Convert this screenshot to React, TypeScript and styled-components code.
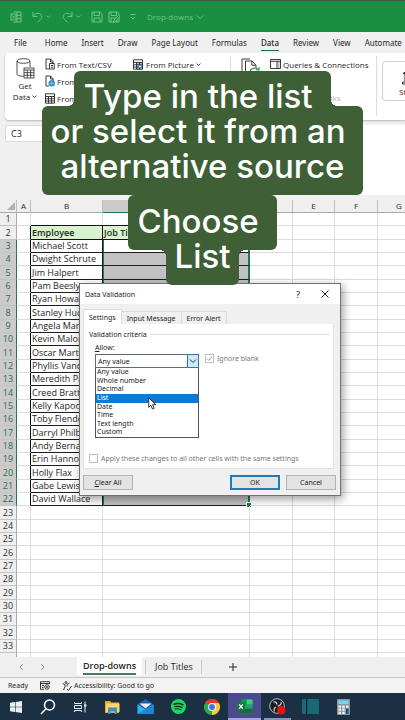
import React from "react";
import styled, { createGlobalStyle, css } from "styled-components";

const wideFont = `"Noto Sans", "Open Sans", sans-serif`;

const GlobalStyle = createGlobalStyle`
  *, *::before, *::after { box-sizing: border-box; }
  html, body, #root { height: 100%; }
  body {
    margin: 0;
    background: #f0f0f0;
    font-family: "Open Sans", "Noto Sans", sans-serif;
    font-size: 8px;
    color: #262626;
  }
  button, select, input { font: inherit; color: inherit; margin: 0; padding: 0; }
  button { background: none; border: 0; }
`;

/* ---------- shell ---------- */

const Screen = styled.main`
  position: relative;
  display: flex;
  flex-direction: column;
  height: 100vh;
  min-height: 720px;
  overflow: hidden;
`;

const TitleBar = styled.header`
  display: flex;
  align-items: center;
  flex: none;
  height: 32px;
  padding-left: 10px;
  background: #1a8f42;
  border-top: 1px solid #3c5a45;
  color: #6cc287;
`;

const QuickTools = styled.div`
  display: flex;
  align-items: center;
  gap: 5px;
  width: 137px;
`;

const IconButton = styled.button`
  display: flex;
  align-items: center;
  gap: 3px;
`;

const FileName = styled.button`
  display: flex;
  align-items: center;
  gap: 3px;
`;

const MenuTabs = styled.nav`
  display: flex;
  flex: none;
  gap: 14px;
  height: 21px;
  padding: 4px 0 0 14px;
  font-family: ${wideFont};
  overflow: hidden;
`;

const MenuTab = styled.button<{ $active?: boolean }>`
  flex: none;
  height: 15px;
  line-height: 14px;
  white-space: nowrap;
  border-bottom: 1px solid transparent;
  &:first-child { margin-right: 4px; }
  ${(p) => p.$active && css`font-weight: 500; border-color: #1d6f42;`}
`;

/* ---------- ribbon ---------- */

const Ribbon = styled.section`
  display: flex;
  flex: none;
  height: 67px;
  margin-left: 5px;
  background: #fff;
  border-radius: 4px 0 0 4px;
  box-shadow: 0 1px 2px #b9b9b9;
  overflow: hidden;
`;

const BigCommand = styled.button<{ $w: number }>`
  display: flex;
  flex-direction: column;
  align-items: center;
  flex: none;
  width: ${(p) => p.$w}px;
  padding-top: 5px;
  line-height: 11px;
  svg { margin-bottom: 1px; }
`;

const CommandColumn = styled.div<{ $w: number }>`
  display: flex;
  flex-direction: column;
  flex: none;
  gap: 3px;
  width: ${(p) => p.$w}px;
  padding-top: 4px;
`;

const Command = styled.button<{ $off?: boolean }>`
  display: flex;
  align-items: center;
  gap: 2px;
  height: 14px;
  white-space: nowrap;
  color: ${(p) => (p.$off ? "#b5b5b5" : "#262626")};
`;

const Divider = styled.div`
  flex: none;
  width: 1px;
  margin: 3px 0 4px;
  background: #dcdcdc;
`;

const DataTypes = styled.div`
  flex: none;
  width: 80px;
  height: 40px;
  margin: 8px 0 0 5px;
  border: 1px solid #d0d0d0;
  border-radius: 3px;
`;

const FormulaRow = styled.div`
  display: flex;
  flex: none;
  align-items: flex-start;
  gap: 60px;
  height: 75px;
  margin: 5px 0 0 5px;
`;

const NameBox = styled.input`
  width: 60px;
  height: 17px;
  padding-left: 5px;
  font-size: 9px;
  background: #fff;
  border: 1px solid #dadada;
  border-radius: 2px;
`;

const FormulaInput = styled.textarea`
  flex: 1;
  min-width: 0;
  height: 70px;
  border: 0;
  resize: none;
  background: #fff;
`;

/* ---------- sheet ---------- */

const SheetArea = styled.section`
  flex: 1;
  min-height: 0;
  overflow: hidden;
  background: #fff;
`;

const Sheet = styled.table`
  width: calc(100% + 16px);
  table-layout: fixed;
  border-collapse: separate;
  border-spacing: 0;
  font-size: 9px;
  line-height: 12px;
`;

const Col = styled.col<{ $w?: number }>`
  width: ${(p) => (p.$w ? p.$w + "px" : "auto")};
`;

const ColHead = styled.th<{ $on?: boolean }>`
  height: 13px;
  padding: 0;
  font-size: 8px;
  font-weight: 400;
  background: ${(p) => (p.$on ? "#cbcbcb" : "#efefef")};
  border-right: 1px solid #bdbdbd;
  border-bottom: 1px solid ${(p) => (p.$on ? "#1d7a48" : "#ababab")};
`;

const Corner = styled(ColHead)`
  svg { display: block; margin-left: auto; }
`;

const Row = styled.tr<{ $tall: boolean }>`
  height: ${(p) => (p.$tall ? 14 : 13)}px;
`;

const RowHead = styled.th<{ $on?: boolean }>`
  padding: 0;
  font-weight: 400;
  text-align: center;
  color: ${(p) => (p.$on ? "#2b6b48" : "#333")};
  background: ${(p) => (p.$on ? "#cbcbcb" : "#efefef")};
  border-bottom: 1px solid #c4c4c4;
  border-right: 1px solid ${(p) => (p.$on ? "#1d7a48" : "#ababab")};
`;

const Cell = styled.td<{ $kind?: "head" | "plainHead" | "name" | "picked" | "first" | "edge" | "corner" }>`
  position: relative;
  padding: 0 0 0 1px;
  white-space: nowrap;
  border-right: 1px solid #dcdcdc;
  border-bottom: 1px solid #dcdcdc;
  ${(p) => p.$kind === "edge" && css`border-right-color: #111;`}
  ${(p) =>
    p.$kind === "head" &&
    css`
      font-weight: 600;
      background: #d9f2d0;
      border-color: #111;
      box-shadow: 0 -1px 0 #111;
    `}
  ${(p) => p.$kind === "name" && css`border-color: #1d1d1d;`}
  ${(p) =>
    (p.$kind === "picked" || p.$kind === "first" || p.$kind === "corner") &&
    css`
      background: ${p.$kind === "first" ? "#fff" : "#c2c2c2"};
      border-bottom-color: #1d1d1d;
      border-right: 2px solid #1d7a48;
      border-left: 1px solid #1d7a48;
    `}
  ${(p) =>
    p.$kind === "corner" &&
    css`
      &::after {
        content: "";
        position: absolute;
        right: -3px;
        bottom: -2px;
        width: 4px;
        height: 4px;
        background: #1d7a48;
        outline: 1px solid #fff;
      }
    `}
`;

/* ---------- bottom bars ---------- */

const SheetTabs = styled.nav`
  display: flex;
  flex: none;
  height: 21px;
  background: #efefef;
  border-bottom: 1px solid #c6c6c6;
`;

const PageArrows = styled.div`
  display: flex;
  align-items: center;
  gap: 16px;
  width: 77px;
  padding-left: 19px;
  color: #8c8c8c;
`;

const SheetTab = styled.button<{ $active?: boolean }>`
  flex: none;
  font-size: 9px;
  height: 19px;
  padding: 0 6px;
  ${(p) =>
    p.$active
      ? css`
          font-weight: 600;
          background: #fff;
          border-radius: 0 0 3px 3px;
          span { display: block; line-height: 14px; border-bottom: 2px solid #3f7f60; }
        `
      : css`
          margin: 3px 0 0 3px;
          padding: 0 8px 0 9px;
          height: 14px;
          line-height: 14px;
          border-left: 1px solid #c9c9c9;
          border-right: 1px solid #c9c9c9;
        `}
`;

const AddSheet = styled.button`
  display: flex;
  align-items: center;
  margin-left: 27px;
`;

const StatusBar = styled.footer`
  display: flex;
  align-items: center;
  flex: none;
  height: 15px;
  padding-left: 8px;
  font-family: ${wideFont};
  font-size: 7px;
  background: #f3f3f3;
  svg { margin-left: 12px; }
  svg + svg { margin-right: 2px; }
`;

const Taskbar = styled.nav`
  display: flex;
  flex: none;
  height: 27px;
  background: #1c3044;
`;

const TaskButton = styled.button<{ $wide?: boolean; $state?: "active" | "open" }>`
  display: flex;
  align-items: center;
  justify-content: center;
  flex: none;
  width: ${(p) => (p.$wide ? 33 : 32)}px;
  ${(p) => p.$state === "active" && css`background: #4a4a8c; box-shadow: inset 0 -2px 0 #a9a6dd;`}
  ${(p) =>
    p.$state === "open" &&
    css`
      background: linear-gradient(#8f8fc0, #8f8fc0) center bottom / 27px 2px no-repeat;
    `}
`;

/* ---------- dialog ---------- */

const Dialog = styled.div`
  position: absolute;
  left: 79px;
  top: 283px;
  width: 262px;
  background: #f0f0f0;
  border: 1px solid #707070;
  box-shadow: 2px 3px 9px rgba(0, 0, 0, 0.4);
  padding-bottom: 5px;
  font-family: ${wideFont};
  font-size: 7px;
  line-height: 9px;
  color: #1a1a1a;
`;

const DialogTitle = styled.div`
  display: flex;
  align-items: center;
  height: 20px;
  padding: 0 11px 0 5px;
  background: #fff;
`;

const DialogName = styled.h2`
  flex: 1;
  margin: 0;
  font-size: 7px;
  font-weight: 400;
`;

const HelpButton = styled.button`
  margin-right: 21px;
  font-size: 9px;
`;

const DialogTabs = styled.div`
  display: flex;
  align-items: flex-end;
  padding: 5px 0 0 3px;
`;

const DialogTab = styled.button<{ $active?: boolean }>`
  height: ${(p) => (p.$active ? 15 : 13)}px;
  padding: 0 5px;
  border: 1px solid #dcdcdc;
  border-bottom: 0;
  background: ${(p) => (p.$active ? "#fff" : "#f0f0f0")};
  & + & { border-left: 0; }
`;

const Pane = styled.div`
  display: flex;
  flex-direction: column;
  height: 145px;
  margin: 0 6px 0 3px;
  padding: 6px 3px 5px 5px;
  background: #fff;
  border: 1px solid #e2e2e2;
  border-top: 0;
`;

const GroupTitle = styled.div`
  display: flex;
  align-items: center;
  gap: 3px;
  &::after { content: ""; flex: 1; height: 1px; background: #dcdcdc; }
`;

const AllowLabel = styled.label`
  margin: 4px 0 2px 6px;
  &::first-letter { text-decoration: underline; }
`;

const CriteriaRow = styled.div`
  display: flex;
  gap: 6px;
  margin-left: 6px;
`;

const SelectWrap = styled.div`
  position: relative;
  width: 104px;
  height: 14px;
`;

const AllowSelect = styled.select`
  width: 100%;
  height: 14px;
  padding-left: 2px;
  appearance: none;
  background: #fff;
  border: 1px solid #5b6b7a;
  border-radius: 0;
`;

const SelectArrow = styled.span`
  position: absolute;
  right: 0;
  top: 0;
  display: flex;
  align-items: center;
  justify-content: center;
  width: 12px;
  height: 14px;
  background: #cfe7f6;
  border: 1px solid #2b78ae;
  pointer-events: none;
`;

const Options = styled.ul`
  position: absolute;
  left: 0;
  top: 14px;
  display: grid;
  grid-template-rows: repeat(8, 1fr);
  width: 104px;
  height: 70px;
  margin: 0;
  padding: 0;
  list-style: none;
  background: #fff;
  border: 1px solid #4a5560;
  border-top: 0;
`;

const Option = styled.li<{ $on: boolean }>`
  padding-left: 1px;
  line-height: 8px;
  color: ${(p) => (p.$on ? "#fff" : "#1a1a1a")};
  background: ${(p) => (p.$on ? "#0f7bd0" : "#fff")};
`;

const Pointer = styled.svg`
  position: absolute;
  left: 52px;
  top: 29px;
`;

const CheckLabel = styled.label`
  display: flex;
  align-items: center;
  gap: 3px;
  height: 9px;
  white-space: nowrap;
  color: #787878;
`;

const Check = styled.input`
  appearance: none;
  width: 9px;
  height: 9px;
  background: #fff;
  border: 1px solid #c0c0c0;
  &:checked {
    background: #fff
      url("data:image/svg+xml,%3Csvg xmlns='http://www.w3.org/2000/svg' viewBox='0 0 7 7'%3E%3Cpath d='M1 3.6 2.8 5.4 6 1.6' fill='none' stroke='%23999'/%3E%3C/svg%3E");
  }
`;

const Spacer = styled.div`
  flex: 1;
`;

const DialogActions = styled.div`
  display: flex;
  gap: 6px;
  padding: 6px 4px 0 3px;
`;

const DialogButton = styled.button<{ $main?: boolean }>`
  width: 50px;
  height: 15px;
  background: #e3e3e3;
  border: ${(p) => (p.$main ? "2px solid #1f7ab8" : "1px solid #b3b3b3")};
`;

/* ---------- captions ---------- */

const Captions = styled.div`
  position: absolute;
  top: 71px;
  left: 0;
  right: 0;
  display: flex;
  flex-direction: column;
  align-items: center;
  font-family: Inter, sans-serif;
  font-size: 33px;
  font-weight: 500;
  line-height: 35px;
  color: #fff;
`;

const CaptionBlock = styled.p<{ $w: number; $h: number; $pad: number }>`
  position: relative;
  width: ${(p) => p.$w}px;
  height: ${(p) => p.$h}px;
  margin: 0;
  padding-top: ${(p) => p.$pad}px;
  text-align: center;
  white-space: pre;
  background: #3f6036;
  border-radius: 6px;
`;

const notch = css`
  content: "";
  position: absolute;
  width: 6px;
  height: 6px;
`;

const CaptionTop = styled(CaptionBlock)`
  z-index: 1;
  border-radius: 6px 6px 0 0;
  &::before, &::after { ${notch} bottom: 0; }
  &::before { right: 100%; background: radial-gradient(circle at 0 0, transparent 6px, #3f6036 6px); }
  &::after { left: 100%; background: radial-gradient(circle at 100% 0, transparent 6px, #3f6036 6px); }
`;

const CaptionTail = styled(CaptionBlock)`
  margin-top: -11px;
  border-radius: 0 0 6px 6px;
  &::before, &::after { ${notch} top: 11px; }
  &::before { right: 100%; background: radial-gradient(circle at 0 100%, transparent 6px, #3f6036 6px); }
  &::after { left: 100%; background: radial-gradient(circle at 100% 100%, transparent 6px, #3f6036 6px); }
`;

/* ---------- drawings ---------- */

const Chevron = ({ size = 5, thin }: { size?: number; thin?: boolean }) => (
  <svg width={size} height={size} viewBox="0 0 8 8" fill="none" stroke="currentColor" strokeWidth={thin ? 0.9 : 1.4}>
    <path d="M1 2.5 4 5.5 7 2.5" />
  </svg>
);

const line = { fill: "none", stroke: "currentColor", strokeWidth: 1 } as const;

const BookIcon = () => (
  <svg width="12" height="12" viewBox="0 0 12 12" {...line}>
    <path d="M3.500 1h7.500v10h-7.500M7 1v10M3 4.300h8M3 7.600h8" />
    <rect x="1" y="3" width="5" height="6" fill="#1a8f42" />
    <path d="m2.300 4.500 2.400 3M4.700 4.500l-2.400 3" />
  </svg>
);
const UndoIcon = ({ flip }: { flip?: boolean }) => (
  <svg width="11" height="12" viewBox="0 0 11 12" {...line}>
    <g transform={flip ? "matrix(-1 0 0 1 11 0)" : undefined}>
      <path d="M1 1v4.500h4.500M1.300 5.200C3 2.500 5.500 1.600 7.800 2.700c2.500 1.300 2.500 4 .7 5.800L5.500 11.300" />
    </g>
  </svg>
);
const SaveIcon = ({ edit }: { edit?: boolean }) => (
  <svg width="12" height="12" viewBox="0 0 12 12" {...line}>
    <path d="M1 1h8.500L11 2.500V11H1zM3 1v3.500h5.500V1M3 11V7h6v4" />
    {edit && <path d="M5.500 11.500 6 9l4.500-4.500 1.200 1.200L7.500 10.500z" fill="#1a8f42" />}
  </svg>
);
const MoreIcon = () => (
  <svg width="6" height="8" viewBox="0 0 6 8" {...line}>
    <path d="M.5 1.500h5M1 4l2 2 2-2" />
  </svg>
);

const DatabaseIcon = () => (
  <svg width="19" height="21" viewBox="0 0 19 21" {...line} strokeWidth=".8">
    <ellipse cx="7.500" cy="3" rx="6.500" ry="2.300" />
    <path d="M1 3v13c0 1.300 2.700 2.300 6.500 2.300M14 3v6" />
    <rect x="8" y="10" width="10" height="10" fill="#fff" />
    <path d="M8 12h10M8 14.700h10M8 17.300h10M11.300 12v8M14.700 12v8" />
  </svg>
);
const PageIcon = ({ kind }: { kind: "text" | "web" }) => (
  <svg width="10" height="12" viewBox="0 0 10 12" {...line} strokeWidth=".9">
    <path d="M4 11H1V1h4.500L8 3.500V6M5.500 1v3H8" />
    {kind === "web" ? (
      <g>
        <circle cx="6.800" cy="8.300" r="2.900" fill="#2b93c9" stroke="#1e7fb5" />
        <path d="M4 8.300h5.600M6.800 5.500v5.600" stroke="#bfe3f5" strokeWidth=".5" />
      </g>
    ) : (
      <path d="M4.500 5.500h4.800V11H4.500zM6 7.500h2M6 9.200h2" />
    )}
  </svg>
);
const TableIcon = ({ tint }: { tint?: boolean }) => (
  <svg width={tint ? 12 : 10} height="11" viewBox="0 0 10 11" {...line} strokeWidth=".9">
    {tint && <path d="M4 4h5.500v6.500H4z" fill="#8cc7e0" stroke="none" />}
    <path d="M.5.800h9v9.400h-9zM.5 3.500h9M.5 5.800h9M.5 8h9M3.500 3.500v6.700M6.500 3.500v6.700" />
    {tint && <circle cx="7" cy="7.500" r="1.400" fill="#fff" stroke="#2a7fa5" />}
  </svg>
);
const RefreshIcon = () => (
  <svg width="19" height="21" viewBox="0 0 19 21" {...line} strokeWidth=".9">
    <path d="M3.500 17H1V1h8M6 19H4.500V3h6.300L15 7.200V10M10.800 3v4.200H15" />
    <path d="M9 15c0-5 6-6 8.500-3.500M18 9v3h-3M17.500 15c0 5-6 6-8.500 3.500" stroke="#2f9a52" strokeWidth="1.200" />
  </svg>
);
const PanelIcon = () => (
  <svg width="11" height="10" viewBox="0 0 11 10" {...line} strokeWidth=".9">
    <path d="M.5.500h10v9H.5zM.5 2.300h10" />
    <path d="M7 2.300v7.200" />
    <path d="M8 4h1.500M8 6h1.500M8 8h1.500" stroke="#2a8aa8" />
  </svg>
);
const LinkIcon = () => (
  <svg width="9" height="10" viewBox="0 0 9 10" {...line}>
    <path d="M1 1h5v8H1zM5 6h3" />
  </svg>
);
const BankIcon = () => (
  <svg width="20" height="18" viewBox="0 0 20 18" {...line}>
    <path d="M2 6.500 10 1l8 5.500zM4 7v7M8 7v7M12 7v7M16 7v7M1.500 15h17v2h-17z" />
  </svg>
);
const Arrow = ({ left }: { left?: boolean }) => (
  <svg width="5" height="8" viewBox="0 0 5 8" {...line}>
    <path d={left ? "M4 1 1 4l3 3" : "M1 1l3 3-3 3"} />
  </svg>
);

const WindowsLogo = () => (
  <svg width="12" height="12" viewBox="0 0 12 12" fill="#e8f0f6">
    <path d="M0 1.700 5 1v4.700H0zM5.600.900 12 0v5.700H5.600zM0 6.300h5V11l-5-.700zM5.600 6.300H12V12l-6.400-.900z" />
  </svg>
);
const SearchIcon = () => (
  <svg width="16" height="16" viewBox="0 0 16 16" fill="none" stroke="#fff" strokeWidth="1.500">
    <circle cx="9.500" cy="6" r="5" />
    <path d="M6 9.700 1 15" />
  </svg>
);
const TaskViewIcon = () => (
  <svg width="13" height="12" viewBox="0 0 13 12" fill="none" stroke="#e6edf3">
    <path d="M.5 1v1.500h7V1M.5 11V9.500h7V11M.5 4.500h7v3h-7zM11 .500v11" />
    <path d="M10 3.500h2.500v2H10z" fill="#e6edf3" stroke="none" />
  </svg>
);
const FolderIcon = () => (
  <svg width="15" height="14" viewBox="0 0 15 14">
    <path d="M0 1h5l1.500 1.500H14V13H0z" fill="#e8a92b" />
    <path d="M1 3.500h13.500V12H1z" fill="#fbd766" />
    <path d="M3 7.500h9V14H9.500v-2.500h-4V14H3z" fill="#3d8fd1" />
  </svg>
);
const MailIcon = () => (
  <svg width="17" height="15" viewBox="0 0 17 15">
    <path d="M.5 5.500 8.500 0l8 5.500v2H.5z" fill="#1565b0" />
    <path d="M2.500 4.500h12L8.500 9.500z" fill="#e9f2f9" />
    <path d="M.5 5.500 8.500 10l8-4.500V15H.5z" fill="#35b1f1" />
    <path d="M.5 15 16.500 5.500V15z" fill="#1c86d6" />
  </svg>
);
const SpotifyIcon = () => (
  <svg width="15" height="15" viewBox="0 0 15 15">
    <circle cx="7.500" cy="7.500" r="7.500" fill="#1ed760" />
    <g fill="none" stroke="#14251c" strokeLinecap="round">
      <path d="M3.200 5.200c3-1 6.200-.7 8.800.7" strokeWidth="1.500" />
      <path d="M3.700 7.700c2.500-.7 5-.5 7.300.7" strokeWidth="1.200" />
      <path d="M4.200 10c2-.5 4-.3 5.900.7" />
    </g>
  </svg>
);
const ChromeIcon = () => (
  <svg width="16" height="16" viewBox="0 0 16 16">
    <path d="M8 8 1.070 4A8 8 0 0 1 14.930 4z" fill="#e33b2e" />
    <path d="M8 8 14.930 4A8 8 0 0 1 8 16z" fill="#fcc934" />
    <path d="M8 8v8A8 8 0 0 1 1.070 4z" fill="#2da94f" />
    <path d="M8 4h6.930L11.500 10z" fill="#fcc934" />
    <path d="M1.070 4H8v4L4.500 10z" fill="#2da94f" />
    <path d="M1.070 4A8 8 0 0 1 14.930 4H8L4.500 6z" fill="#e33b2e" />
    <circle cx="8" cy="8" r="3.900" fill="#fff" />
    <circle cx="8" cy="8" r="3" fill="#3b78e7" />
  </svg>
);
const ExcelIcon = () => (
  <svg width="17" height="15" viewBox="0 0 17 15">
    <rect x="5" y=".5" width="11.500" height="14" rx="1" fill="#21a366" />
    <path d="M5 .500h5.700v4.700H5z" fill="#159355" />
    <path d="M10.700.500h5.800v4.700h-5.800z" fill="#3fce86" />
    <path d="M5 9.800h11.500v4.700H5z" fill="#17693e" />
    <rect x="1" y="3.500" width="8" height="8" rx=".8" fill="#107c41" />
    <path d="m3.200 5.300 3.600 4.400M6.800 5.300 3.200 9.700" stroke="#fff" strokeWidth="1.200" />
  </svg>
);
const ObsIcon = () => (
  <svg width="17" height="17" viewBox="0 0 17 17">
    <circle cx="8" cy="8" r="7.300" fill="#1b1b1f" stroke="#c6ccd2" strokeWidth=".9" />
    <g fill="none" stroke="#c6ccd2" strokeWidth="1.300">
      <path d="M8 6.500C7.500 4 5.500 3.500 4.500 4.200M8.700 8.200c2.500-.8 3.800-2.400 3.300-4M7 9c-2 1.200-2.500 3-1.500 4.300" />
    </g>
    <circle cx="12.300" cy="12.300" r="4.200" fill="#f01010" />
  </svg>
);
const PanelsIcon = () => (
  <svg width="17" height="15" viewBox="0 0 17 15">
    <path d="M0 0h17v15H0z" fill="#176a77" />
    <path d="M4 0h1.200v15H4z" fill="#0c1a22" />
  </svg>
);
const CalculatorIcon = () => (
  <svg width="13" height="16" viewBox="0 0 13 16">
    <rect width="13" height="16" rx=".8" fill="#8b969e" />
    <path d="M1.500 1.500h10v3.500h-10z" fill="#79d5ef" />
    <g fill="#eef3f6">
      <path d="M1.500 6.500h2.500v2.200H1.500zM5.200 6.500h2.500v2.200H5.200zM9 6.500h2.500v2.200H9zM1.500 9.600h2.500v2.200H1.500zM5.200 9.600h2.500v2.200H5.200zM1.500 12.700h2.500v2.200H1.500zM5.200 12.700h2.500v2.200H5.200z" />
    </g>
    <path d="M9 9.600h2.500v5.300H9z" fill="#1f4f86" />
  </svg>
);

/* ---------- data ---------- */

const employees = [
  "Michael Scott", "Dwight Schrute", "Jim Halpert", "Pam Beesly", "Ryan Howard",
  "Stanley Hudson", "Angela Martin", "Kevin Malone", "Oscar Martinez", "Phyllis Vance",
  "Meredith Palmer", "Creed Bratton", "Kelly Kapoor", "Toby Flenderson", "Darryl Philbin",
  "Andy Bernard", "Erin Hannon", "Holly Flax", "Gabe Lewis", "David Wallace",
];
const lastPicked = employees.length + 2;
const options = ["Any value", "Whole number", "Decimal", "List", "Date", "Time", "Text length", "Custom"];
const menus = ["File", "Home", "Insert", "Draw", "Page Layout", "Formulas", "Data", "Review", "View", "Automate"];
const letters = ["A", "B", "C", "D", "E", "F", "G"];
const columns = [17, 14, 72, 147, 43, 42, 43, undefined];

function SheetRow({ n }: { n: number }) {
  const name = employees[n - 3];
  const picked = name !== undefined;
  const jobKind = n === 3 ? "first" : n === lastPicked ? "corner" : picked ? "picked" : n === 2 ? "head" : undefined;
  return (
    <Row $tall={n % 3 === 2}>
      <RowHead scope="row" $on={picked}>{n < 34 ? n : ""}</RowHead>
      <Cell $kind={picked || n === 2 ? "edge" : undefined} />
      <Cell $kind={picked ? "name" : n === 2 ? "head" : undefined}>{n === 2 ? "Employee" : name}</Cell>
      <Cell $kind={jobKind}>{n === 2 ? "Job Title" : ""}</Cell>
      <Cell /><Cell /><Cell /><Cell />
    </Row>
  );
}

export default function App() {
  return (
    <Screen>
      <GlobalStyle />
      <TitleBar>
        <QuickTools>
          <BookIcon />
          <Spacer />
          <IconButton aria-label="Undo"><UndoIcon /><Chevron /></IconButton>
          <Spacer />
          <IconButton aria-label="Redo"><UndoIcon flip /><Chevron /></IconButton>
          <Spacer />
          <IconButton aria-label="Save"><SaveIcon /></IconButton>
          <IconButton aria-label="Save as"><SaveIcon edit /></IconButton>
          <Spacer />
          <IconButton aria-label="Customize"><MoreIcon /></IconButton>
          <Spacer />
          <Spacer />
        </QuickTools>
        <FileName>Drop-downs <Chevron size={8} thin /></FileName>
      </TitleBar>

      <MenuTabs>
        {menus.map((m) => <MenuTab key={m} $active={m === "Data"}>{m}</MenuTab>)}
      </MenuTabs>

      <Ribbon>
        <BigCommand $w={40}>
          <DatabaseIcon />
          <span>Get<br />Data <Chevron /></span>
        </BigCommand>
        <CommandColumn $w={87}>
          <Command><PageIcon kind="text" />From Text/CSV</Command>
          <Command><PageIcon kind="web" />From Web</Command>
          <Command><TableIcon />From Table</Command>
        </CommandColumn>
        <CommandColumn $w={98}>
          <Command><TableIcon tint />From Picture <Chevron /></Command>
        </CommandColumn>
        <Divider />
        <BigCommand $w={39} aria-label="Refresh"><RefreshIcon /></BigCommand>
        <CommandColumn $w={106}>
          <Command><PanelIcon />Queries &amp; Connections</Command>
          <Spacer />
          <Command $off><LinkIcon />Workbook Links</Command>
          <Spacer />
        </CommandColumn>
        <Divider />
        <DataTypes>
          <BigCommand $w={56}><BankIcon />Stocks</BigCommand>
        </DataTypes>
      </Ribbon>

      <FormulaRow>
        <NameBox aria-label="Name box" defaultValue="C3" />
        <FormulaInput aria-label="Formula" />
      </FormulaRow>

      <SheetArea>
        <Sheet>
          <colgroup>
            {columns.map((w, i) => <Col key={i} $w={w} />)}
          </colgroup>
          <thead>
            <tr>
              <Corner>
                <svg width="10" height="10" viewBox="0 0 10 10"><path d="M9 1v8H1z" fill="#b0b0b0" /></svg>
              </Corner>
              {letters.map((l) => <ColHead key={l} scope="col" $on={l === "C"}>{l}</ColHead>)}
            </tr>
          </thead>
          <tbody>
            {Array.from({ length: 34 }, (_, i) => <SheetRow key={i} n={i + 1} />)}
          </tbody>
        </Sheet>
      </SheetArea>

      <SheetTabs>
        <PageArrows><Arrow left /><Arrow /></PageArrows>
        <SheetTab $active><span>Drop-downs</span></SheetTab>
        <SheetTab>Job Titles</SheetTab>
        <AddSheet aria-label="New sheet">
          <svg width="8" height="8" viewBox="0 0 8 8" {...line}><path d="M4 0v8M0 4h8" /></svg>
        </AddSheet>
      </SheetTabs>

      <StatusBar>
        <span>Ready</span>
        <svg width="10" height="9" viewBox="0 0 10 9" {...line} strokeWidth=".9">
          <path d="M.5 4V.700h9V3M.5 2.500h9M.5 4v4.300H4M2 4.500h2M2 6.500h1.500" />
          <circle cx="7" cy="6" r="2.300" />
          <circle cx="7" cy="6" r=".6" />
        </svg>
        <svg width="10" height="10" viewBox="0 0 10 10" {...line} strokeWidth=".9">
          <circle cx="4" cy="1.500" r="1" />
          <path d="M.7 2.500 3 3.700v2L1.500 9M7.500 2 5 3.700v1.800M5 8l1.500 1.500L9.500 5" />
        </svg>
        <span>Accessibility: Good to go</span>
      </StatusBar>

      <Taskbar>
        <TaskButton aria-label="Start"><WindowsLogo /></TaskButton>
        <TaskButton aria-label="Search"><SearchIcon /></TaskButton>
        <TaskButton aria-label="Task view"><TaskViewIcon /></TaskButton>
        <TaskButton $wide aria-label="Files"><FolderIcon /></TaskButton>
        <TaskButton $wide aria-label="Mail"><MailIcon /></TaskButton>
        <TaskButton $wide aria-label="Spotify"><SpotifyIcon /></TaskButton>
        <TaskButton $wide aria-label="Chrome"><ChromeIcon /></TaskButton>
        <TaskButton $wide $state="active" aria-label="Excel"><ExcelIcon /></TaskButton>
        <TaskButton $wide $state="open" aria-label="OBS"><ObsIcon /></TaskButton>
        <TaskButton $wide aria-label="Panels"><PanelsIcon /></TaskButton>
        <TaskButton aria-label="Calculator"><CalculatorIcon /></TaskButton>
      </Taskbar>

      <Dialog role="dialog" aria-labelledby="dialog-name">
        <DialogTitle>
          <DialogName id="dialog-name">Data Validation</DialogName>
          <HelpButton>?</HelpButton>
          <IconButton aria-label="Close">
            <svg width="8" height="8" viewBox="0 0 8 8" {...line}><path d="m.5.500 7 7M7.500.500l-7 7" /></svg>
          </IconButton>
        </DialogTitle>
        <DialogTabs role="tablist">
          <DialogTab role="tab" $active>Settings</DialogTab>
          <DialogTab role="tab">Input Message</DialogTab>
          <DialogTab role="tab">Error Alert</DialogTab>
        </DialogTabs>
        <Pane>
          <GroupTitle>Validation criteria</GroupTitle>
          <AllowLabel htmlFor="allow">Allow:</AllowLabel>
          <CriteriaRow>
            <SelectWrap>
              <AllowSelect id="allow" defaultValue="Any value">
                {options.map((o) => <option key={o}>{o}</option>)}
              </AllowSelect>
              <SelectArrow><Chevron size={8} thin /></SelectArrow>
              <Options role="listbox" aria-label="Allow">
                {options.map((o) => (
                  <Option key={o} role="option" aria-selected={o === "List"} $on={o === "List"}>{o}</Option>
                ))}
                <Pointer width="9" height="13" viewBox="0 0 9 13">
                  <path d="M.7.700v9.600l2.200-2 1.500 3.700 1.700-.7-1.500-3.600h3z" fill="#fff" stroke="#222" strokeWidth=".9" />
                </Pointer>
              </Options>
            </SelectWrap>
            <CheckLabel><Check type="checkbox" defaultChecked disabled />Ignore blank</CheckLabel>
          </CriteriaRow>
          <Spacer />
          <CheckLabel>
            <Check type="checkbox" disabled />
            Apply these changes to all other cells with the same settings
          </CheckLabel>
        </Pane>
        <DialogActions>
          <DialogButton><u>C</u>lear All</DialogButton>
          <Spacer />
          <DialogButton $main>OK</DialogButton>
          <DialogButton>Cancel</DialogButton>
        </DialogActions>
      </Dialog>

      <Captions>
        <CaptionTop $w={257} $h={35} $pad={8}>{"Type in the list "}</CaptionTop>
        <CaptionBlock $w={321} $h={89} $pad={8}>{"or select it from an \nalternative source"}</CaptionBlock>
        <CaptionBlock $w={149} $h={55} $pad={9}>{"Choose "}</CaptionBlock>
        <CaptionTail $w={73} $h={46} $pad={0}>List</CaptionTail>
      </Captions>
    </Screen>
  );
}
